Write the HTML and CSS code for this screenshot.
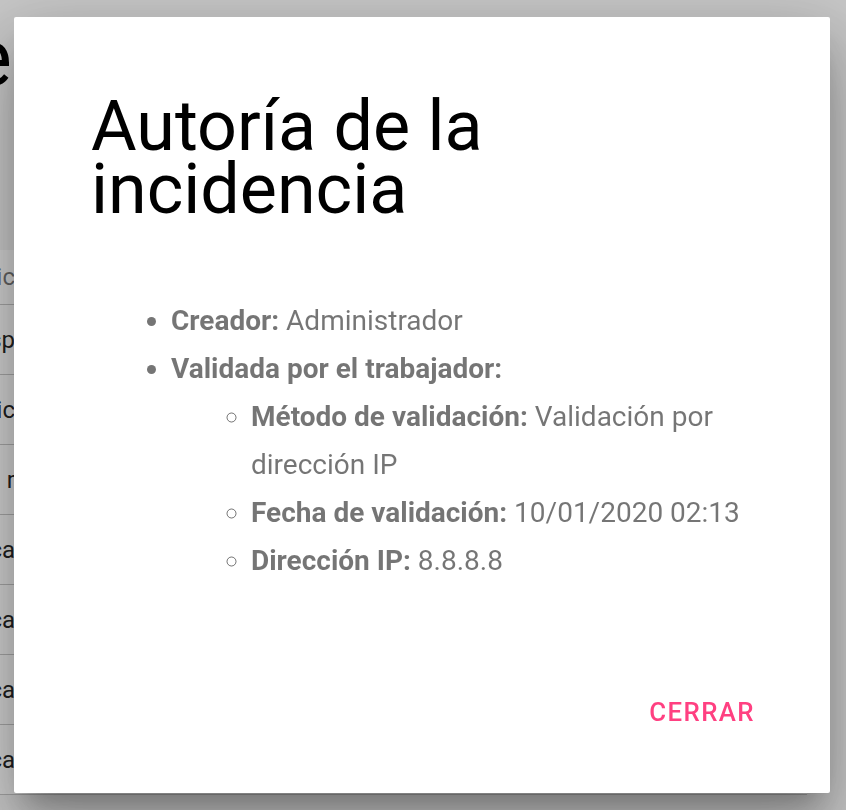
FILE: index.html
```html
<!DOCTYPE html>
<html lang="es">
<head>
<meta charset="utf-8">
<title>Autoría de la incidencia</title>
<link rel="stylesheet" href="styles.css">
</head>
<body>
<div class="page">
  <div class="page-title"><span>Incidencias de</span></div>
  <div class="card">
    <div class="row row-head"><div class="cell">ic</div></div>
    <div class="row"><div class="cell">sp</div></div>
    <div class="row"><div class="cell">ic</div></div>
    <div class="row"><div class="cell">&nbsp;r</div></div>
    <div class="row"><div class="cell">ca</div></div>
    <div class="row"><div class="cell">ca</div></div>
    <div class="row"><div class="cell">ca</div></div>
    <div class="row"><div class="cell">ca</div></div>
  </div>
</div>
<div class="overlay"></div>
<div class="dialog" role="dialog">
  <h2 class="dialog-title">Autoría de la incidencia</h2>
  <ul class="info-list">
    <li><b>Creador:</b> Administrador</li>
    <li><b>Validada por el trabajador:</b>
      <ul class="sub-list">
        <li><b>Método de validación:</b> Validación por dirección IP</li>
        <li><b>Fecha de validación:</b> 10/01/2020 02:13</li>
        <li><b>Dirección IP:</b> 8.8.8.8</li>
      </ul>
    </li>
  </ul>
  <div class="actions"><button class="btn">Cerrar</button></div>
</div>
</body>
</html>
```
FILE: styles.css
```css
html, body {
  margin: 0;
  padding: 0;
}
body {
  font-family: Roboto, "Noto Sans", sans-serif;
  background: #f5f5f5;
  width: 846px;
  height: 810px;
  overflow: hidden;
}
.page {
  display: flex;
  flex-direction: column;
}
.page-title {
  margin-top: 18px;
  width: 12px;
  height: 80px;
  display: flex;
  justify-content: flex-end;
  overflow: hidden;
  white-space: nowrap;
  font-size: 80px;
  line-height: 80px;
  color: #000;
}
.card {
  margin-top: 152px;
  width: 807px;
  background: #fff;
}
.row {
  height: 70px;
  display: flex;
  align-items: center;
  border-bottom: 1px solid #c8c8c8;
  box-sizing: border-box;
}
.row-head {
  height: 55px;
  color: rgba(0,0,0,.54);
}
.cell {
  width: 15px;
  display: flex;
  justify-content: flex-end;
  overflow: hidden;
  white-space: nowrap;
  font-size: 24px;
}
.row:not(.row-head) .cell {
  color: rgba(0,0,0,.87);
}
.overlay {
  position: fixed;
  inset: 0;
  background: rgba(0,0,0,.19);
}
.dialog {
  position: fixed;
  left: 14px;
  top: 17px;
  width: 816px;
  height: 776px;
  box-sizing: border-box;
  padding: 78px 77px 0 77px;
  background: #fff;
  border-radius: 2px;
  display: flex;
  flex-direction: column;
  box-shadow: 0 19px 26px -12px rgba(0,0,0,.25), 0 42px 66px 5px rgba(0,0,0,.18), 0 16px 80px 14px rgba(0,0,0,.14);
}
.dialog-title {
  margin: 0;
  font-weight: 400;
  font-size: 70px;
  line-height: 63px;
  color: #000;
}
.info-list {
  margin: 76px 0 0;
  padding-left: 80px;
  font-size: 28px;
  line-height: 48px;
  color: rgba(0,0,0,.54);
  list-style: disc;
}
.info-list b {
  font-weight: 700;
}
.sub-list {
  margin: 0;
  padding-left: 80px;
  list-style: circle;
}
.actions {
  margin-top: auto;
  margin-right: -16px;
  padding-bottom: 50px;
  display: flex;
  justify-content: flex-end;
}
.btn {
  height: 63px;
  padding: 0 14px;
  border: 0;
  background: transparent;
  font-family: Roboto, "Noto Sans", sans-serif;
  font-weight: 500;
  font-size: 25.8px;
  letter-spacing: 1.4px;
  text-transform: uppercase;
  color: #ff4081;
  cursor: pointer;
}
```
